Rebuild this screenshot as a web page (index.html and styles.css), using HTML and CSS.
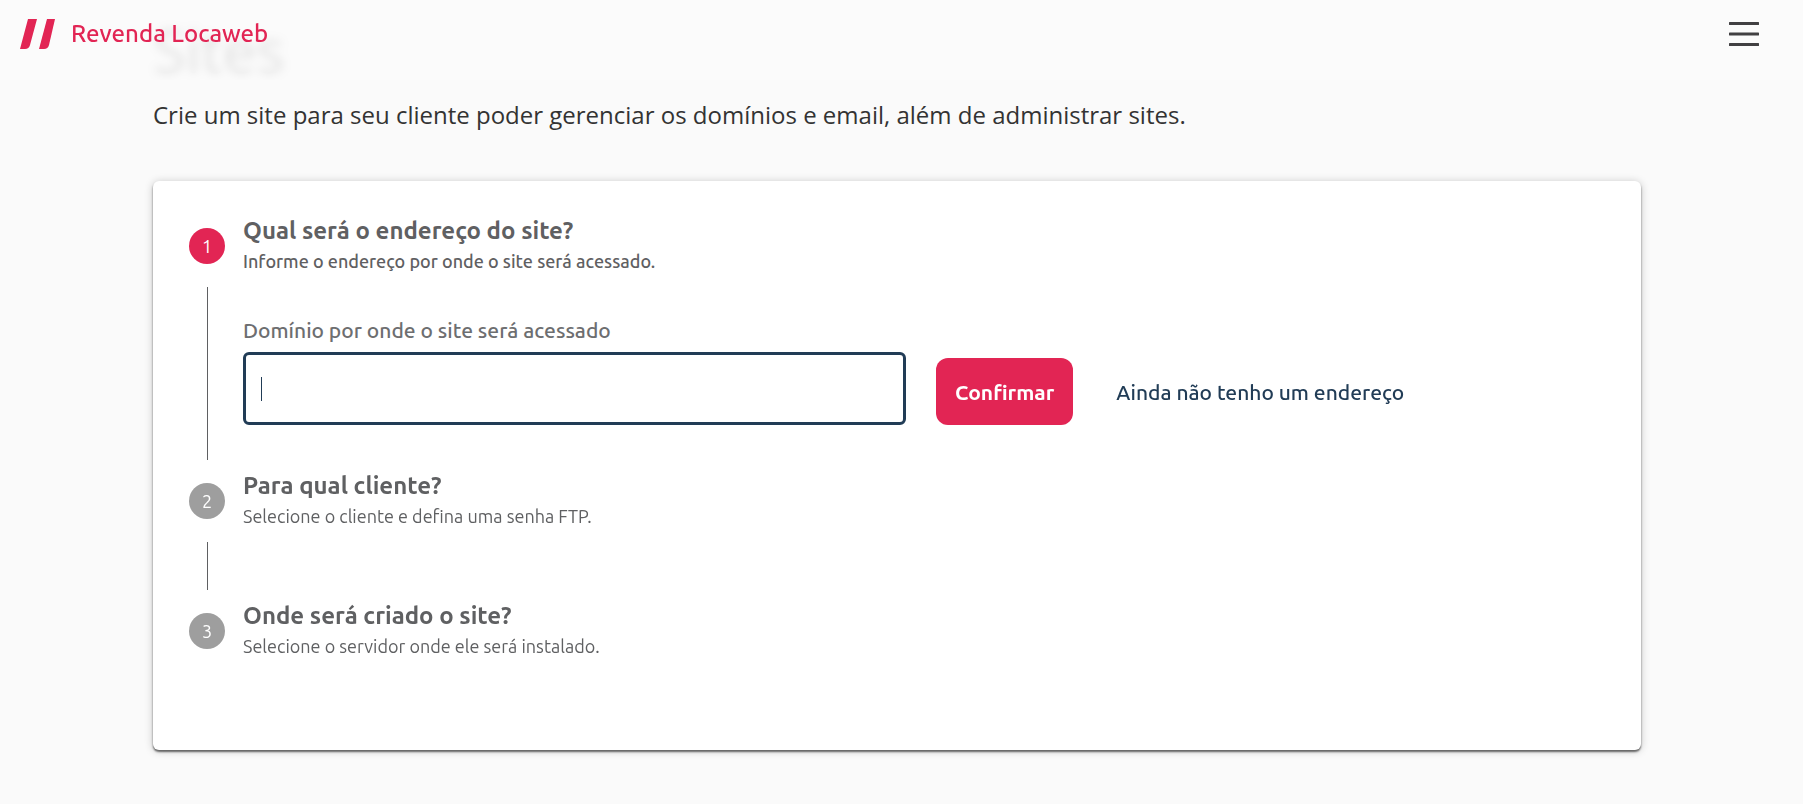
FILE: index.html
```html
<!DOCTYPE html>
<html lang="pt-BR">
<head>
    <meta charset="UTF-8">
    <meta name="viewport" content="width=device-width, initial-scale=1.0">
    <title>Revenda Locaweb</title>
    <link rel="stylesheet" href="styles.css">
</head>
<body>
    <header class="topbar">
        <a class="brand" href="#">
            <svg class="brand-logo" width="36" height="32" viewBox="0 0 36 32" aria-hidden="true">
                <path d="M8 2H17L10 28Q9 32 5 32H0Z"/>
                <path d="M27 2H35L29 28Q28 32 24 32H19Z"/>
            </svg>
            <span>Revenda Locaweb</span>
        </a>
        <button class="menu-button" type="button" aria-label="Menu">
            <svg width="30" height="26" viewBox="0 0 30 26" aria-hidden="true">
                <path d="M1 3.5H29M1 14H29M1 24.5H29"/>
            </svg>
        </button>
    </header>

    <main class="page">
        <h1>Sites</h1>
        <p class="lead">Crie um site para seu cliente poder gerenciar os domínios e email, além de administrar sites.</p>

        <section class="card">
            <div class="step active">
                <div class="step-header">
                    <span class="step-number">1</span>
                    <div>
                        <h2>Qual será o endereço do site?</h2>
                        <p>Informe o endereço por onde o site será acessado.</p>
                    </div>
                </div>
                <form class="step-content">
                    <label for="domain">Domínio por onde o site será acessado</label>
                    <div class="form-row">
                        <input type="text" id="domain" autocomplete="off" autofocus>
                        <button class="confirm" type="button">Confirmar</button>
                        <a class="no-address" href="#">Ainda não tenho um endereço</a>
                    </div>
                </form>
            </div>
            <div class="step">
                <div class="step-header">
                    <span class="step-number">2</span>
                    <div>
                        <h2>Para qual cliente?</h2>
                        <p>Selecione o cliente e defina uma senha FTP.</p>
                    </div>
                </div>
                <div class="step-content"></div>
            </div>
            <div class="step">
                <div class="step-header">
                    <span class="step-number">3</span>
                    <div>
                        <h2>Onde será criado o site?</h2>
                        <p>Selecione o servidor onde ele será instalado.</p>
                    </div>
                </div>
            </div>
        </section>
    </main>
</body>
</html>
```

FILE: styles.css
```css
* {
    box-sizing: border-box;
}

body {
    margin: 0;
    background-color: #fafafa;
    color: #5f6062;
    font-family: Ubuntu, "Noto Sans", sans-serif;
}

h1,
h2,
p {
    margin: 0;
}

a {
    text-decoration: none;
}

.topbar {
    position: fixed;
    top: 0;
    left: 0;
    right: 0;
    z-index: 10;
    display: flex;
    align-items: center;
    justify-content: space-between;
    height: 80px;
    padding: 0 44px 14px 20px;
    background-color: rgba(250, 250, 250, 0.88);
    backdrop-filter: blur(5px);
}

.brand {
    display: flex;
    align-items: center;
    gap: 15px;
    color: #e22554;
    font-size: 24px;
    font-weight: 500;
}

.brand-logo {
    fill: #e22554;
}

.menu-button {
    display: flex;
    padding: 0;
    border: none;
    background: none;
    cursor: pointer;
}

.menu-button path {
    fill: none;
    stroke: #414042;
    stroke-width: 3;
    stroke-linecap: round;
}

.page {
    padding: 10px 162px 54px 153px;
}

h1 {
    color: #333;
    font-family: "Open Sans", sans-serif;
    font-size: 60px;
    font-weight: 400;
    line-height: 80px;
}

.lead {
    color: #333;
    font-family: "Open Sans", sans-serif;
    font-size: 24px;
    font-weight: 400;
    line-height: 50px;
}

.card {
    margin-top: 41px;
    padding: 24px 36px 78px;
    border-radius: 6px;
    background-color: #fff;
    box-shadow: 0 2px 2px rgba(0, 0, 0, 0.55), 0 1px 8px rgba(0, 0, 0, 0.22);
}

.step-header {
    display: flex;
    align-items: center;
    gap: 18px;
    height: 82px;
}

.step-number {
    display: flex;
    align-items: center;
    justify-content: center;
    width: 36px;
    height: 36px;
    border-radius: 50%;
    background-color: #9e9e9e;
    color: #fff;
    font-size: 18px;
}

.step.active .step-number {
    background-color: #e22554;
}

.step h2 {
    font-size: 24px;
    font-weight: 700;
    line-height: 30px;
}

.step p {
    font-size: 18px;
    line-height: 30px;
}

.step.active p {
    font-weight: 500;
}

.step-content {
    min-height: 48px;
    margin-left: 18px;
    padding-left: 35px;
    border-left: 1px solid #5f6062;
}

.step.active .step-content {
    padding-top: 28px;
    padding-bottom: 35px;
}

.step-content label {
    display: block;
    color: #6d6e70;
    font-size: 21px;
    font-weight: 500;
    line-height: 30px;
    margin-bottom: 7px;
}

.form-row {
    display: flex;
    align-items: flex-end;
}

.form-row input {
    width: calc(50% - 18px);
    height: 73px;
    padding: 0 15px;
    border: 3px solid #213c56;
    border-radius: 6px;
    outline: none;
    background-color: #fff;
    color: #213c56;
    font-family: inherit;
    font-size: 21px;
}

.form-row input:focus {
    caret-color: transparent;
    background-image: linear-gradient(#213c56, #213c56);
    background-position: 15px center;
    background-repeat: no-repeat;
    background-size: 1px 24px;
}

.form-row input:focus:not(:placeholder-shown) {
    caret-color: auto;
}

.confirm {
    height: 67px;
    margin-left: 30px;
    padding: 0 19px;
    border: none;
    border-radius: 12px;
    background-color: #e22554;
    color: #fff;
    font-family: inherit;
    font-size: 21px;
    font-weight: 700;
    cursor: pointer;
}

.no-address {
    margin-left: 43px;
    color: #213c56;
    font-size: 21px;
    font-weight: 500;
    line-height: 65px;
}
```
